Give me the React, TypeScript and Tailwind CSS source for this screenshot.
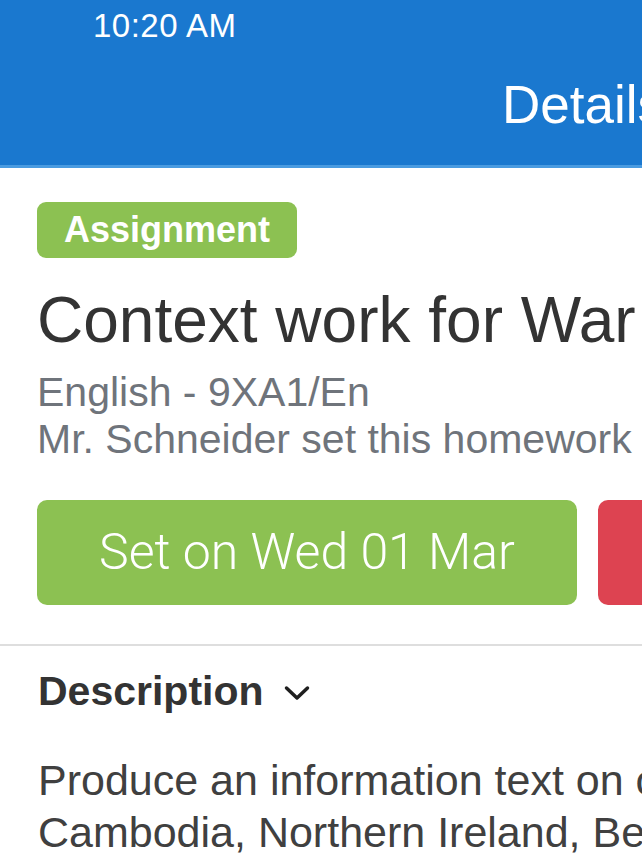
export default function App() {
  return (
    <div className="w-[642px] h-[860px] overflow-hidden bg-white font-['Liberation_Sans',Arial,sans-serif]">
      {/* Blue top bar */}
      <div className="h-[168px] bg-[#1a78cf] border-b-[3px] border-[#4a9be0] flex flex-col">
        <div className="h-[52px] pl-[93px] pt-[7px] text-[33px] leading-[38px] tracking-[0.5px] text-white">10:20 AM</div>
        <div className="pl-[502px] pt-[22px] text-[53px] leading-[62px] text-white whitespace-nowrap">Details</div>
      </div>

      <div className="pl-[37px] pt-[34px] whitespace-nowrap">
        <span className="inline-flex items-center h-[56px] px-[27px] rounded-[9px] bg-[#8cc152] text-white text-[36px] font-bold">
          Assignment
        </span>
        <h1 className="mt-[26px] text-[64px] leading-[72px] text-[#333333]">Context work for War Horse</h1>
        <p className="mt-[13px] text-[41px] leading-[47px] text-[#6f747b]">English - 9XA1/En</p>
        <p className="text-[41px] leading-[47px] text-[#6f747b]">Mr. Schneider set this homework</p>

        <div className="mt-[37px] flex gap-[21px]">
          <div className="w-[540px] h-[105px] shrink-0 rounded-[10px] bg-[#8cc152] flex items-center justify-center font-['Roboto',sans-serif] font-light text-[50px] text-white">
            Set on Wed 01 Mar
          </div>
          <div className="w-[540px] h-[105px] shrink-0 rounded-[10px] bg-[#dd4351]" />
        </div>
      </div>

      <div className="mt-[39px] h-[2px] bg-[#dedede]" />

      <div className="pl-[38px] whitespace-nowrap">
        <div className="mt-[22px] h-[48px] flex items-center gap-[20px] text-[41px] font-bold text-[#333333]">
          Description
          <svg width="26" height="16" viewBox="0 0 26 16" fill="none" className="mt-[2px]">
            <path d="M2.5 3 13 13 23.5 3" stroke="#1f1f1f" strokeWidth="3.5" strokeLinecap="round" strokeLinejoin="round" />
          </svg>
        </div>
        <p className="mt-[38px] text-[43px] leading-[52px] text-[#404040]">
          Produce an information text on conflict in
          <br />
          Cambodia, Northern Ireland, Beirut and
        </p>
      </div>
    </div>
  )
}
